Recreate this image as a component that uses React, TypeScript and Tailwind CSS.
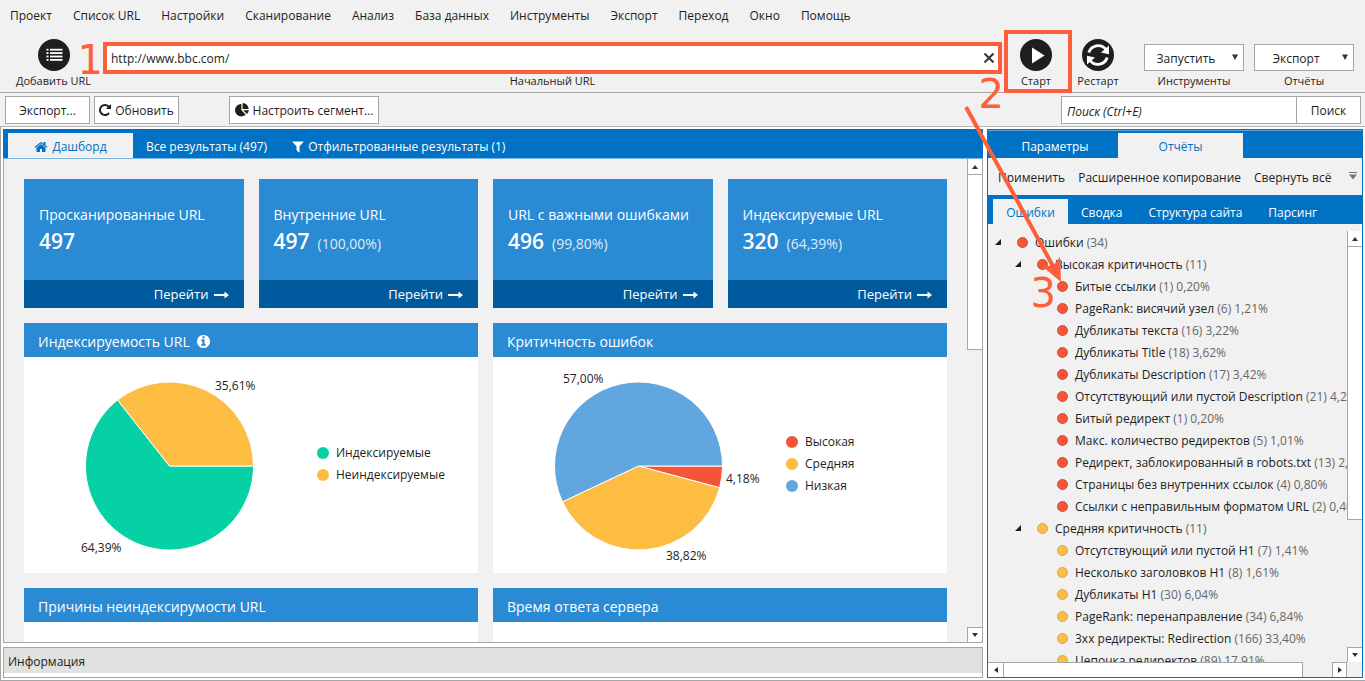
import React, { useState } from "react";

type IconProps = { className?: string };

const HomeIcon = ({ className }: IconProps) => (
  <svg viewBox="0 0 1664 1792" className={className} fill="currentColor" aria-hidden="true">
    <path d="M1408 992v480q0 26-19 45t-45 19h-384v-384h-256v384h-384q-26 0-45-19t-19-45v-480q0-1 .5-3t.5-3l575-474 575 474q1 2 1 6zm223-69l-62 74q-8 9-21 11h-3q-13 0-21-7l-692-577-692 577q-12 8-24 7-13-2-21-11l-62-74q-8-10-7-23.5t11-21.5l719-599q32-26 76-26t76 26l244 204v-195q0-14 9-23t23-9h192q14 0 23 9t9 23v408l219 182q10 8 11 21.5t-7 23.5z" />
  </svg>
);

const FilterIcon = ({ className }: IconProps) => (
  <svg viewBox="192 192 1408 1536" className={className} fill="currentColor" aria-hidden="true">
    <path d="M1595 295q17 41-14 70l-493 493v742q0 42-39 59-13 5-25 5-27 0-45-19l-256-256q-19-19-19-45v-486l-493-493q-31-29-14-70 17-39 59-39h1280q42 0 59 39z" />
  </svg>
);

const RepeatIcon = ({ className }: IconProps) => (
  <svg viewBox="128 128 1536 1536" className={className} fill="currentColor" aria-hidden="true">
    <path d="M1664 256v448q0 26-19 45t-45 19h-448q-42 0-59-40-17-39 14-69l138-138q-148-137-349-137-104 0-198.5 40.5t-163.5 109.5-109.5 163.5-40.5 198.5 40.5 198.5 109.5 163.5 163.5 109.5 198.5 40.5q119 0 225-52t179-147q7-10 23-12 15 0 25 9l137 138q9 8 9.5 20.5t-7.5 22.5q-109 132-264 204.5t-327 72.5q-156 0-298-61t-245-164-164-245-61-298 61-298 164-245 245-164 298-61q147 0 284.5 55.5t244.5 156.5l130-129q29-31 70-14 39 17 39 59z" />
  </svg>
);

const InfoIcon = ({ className }: IconProps) => (
  <svg viewBox="128 128 1536 1536" className={className} fill="currentColor" aria-hidden="true">
    <path d="M1152 1376v-160q0-14-9-23t-23-9h-96v-512q0-14-9-23t-23-9h-320q-14 0-23 9t-9 23v160q0 14 9 23t23 9h96v320h-96q-14 0-23 9t-9 23v160q0 14 9 23t23 9h448q14 0 23-9t9-23zm-128-896v-160q0-14-9-23t-23-9h-192q-14 0-23 9t-9 23v160q0 14 9 23t23 9h192q14 0 23-9t9-23zm640 416q0 209-103 385.5t-279.5 279.5-385.5 103-385.5-103-279.5-279.5-103-385.5 103-385.5 279.5-279.5 385.5-103 385.5 103 279.5 279.5 103 385.5z" />
  </svg>
);

const SegmentIcon = ({ className }: IconProps) => (
  <svg viewBox="0 0 14 14" className={className} fill="currentColor" aria-hidden="true">
    <path d="M6.4 1v6.2l4.3 4.3A6.2 6.2 0 1 1 6.4 1z" />
    <path d="M7.6 0a6.2 6.2 0 0 1 6 6H7.6z" />
    <path d="M8.2 7.2h5.6a6 6 0 0 1-1.7 3.9z" />
  </svg>
);

const ArrowRightIcon = ({ className }: IconProps) => (
  <svg viewBox="0 0 15 8" className={className} fill="currentColor" aria-hidden="true">
    <path d="M0 3h10.500V.4L15 4l-4.500 3.600V5H0z" />
  </svg>
);

const ListCircleIcon = () => (
  <svg viewBox="0 0 32 32" className="size-8" aria-hidden="true">
    <circle cx="16" cy="16" r="16" fill="#1e1e1e" />
    {[10.6, 14, 17.4, 20.8].map((y) => (
      <g key={y} fill="#fff">
        <rect x="8.500" y={y - 0.8} width="2" height="1.800" />
        <rect x="12" y={y - 0.8} width="12.500" height="1.800" />
      </g>
    ))}
  </svg>
);

const PlayCircleIcon = () => (
  <svg viewBox="0 0 32 32" className="size-8" aria-hidden="true">
    <circle cx="16" cy="16" r="16" fill="#1e1e1e" />
    <path d="M12 8.500l12.500 8L12 24.500z" fill="#fff" />
  </svg>
);

const RestartCircleIcon = () => (
  <svg viewBox="0 0 32 32" className="size-8" aria-hidden="true">
    <circle cx="16" cy="16" r="16" fill="#1e1e1e" />
    <g fill="none" stroke="#fff" strokeWidth="2.800">
      <path d="M6.800 13.500a9.800 9.800 0 0 1 17-3.200" />
      <path d="M25.200 18.500a9.800 9.800 0 0 1-17 3.200" />
    </g>
    <path d="M27 6.500v8.700l-8-1.700z" fill="#fff" />
    <path d="M5 25.500v-8.700l8 1.700z" fill="#fff" />
  </svg>
);

const MENU = [
  "Проект", "Список URL", "Настройки", "Сканирование", "Анализ", "База данных",
  "Инструменты", "Экспорт", "Переход", "Окно", "Помощь",
];

const STATS = [
  { title: "Просканированные URL", value: "497", share: "" },
  { title: "Внутренние URL", value: "497", share: "(100,00%)" },
  { title: "URL с важными ошибками", value: "496", share: "(99,80%)" },
  { title: "Индексируемые URL", value: "320", share: "(64,39%)" },
];

type Level = "high" | "medium";
type Row = { depth: 0 | 1 | 2; level: Level; name: string; info: string };

const ROWS: Row[] = [
  { depth: 0, level: "high", name: "Ошибки", info: "(34)" },
  { depth: 1, level: "high", name: "Высокая критичность", info: "(11)" },
  { depth: 2, level: "high", name: "Битые ссылки", info: "(1) 0,20%" },
  { depth: 2, level: "high", name: "PageRank: висячий узел", info: "(6) 1,21%" },
  { depth: 2, level: "high", name: "Дубликаты текста", info: "(16) 3,22%" },
  { depth: 2, level: "high", name: "Дубликаты Title", info: "(18) 3,62%" },
  { depth: 2, level: "high", name: "Дубликаты Description", info: "(17) 3,42%" },
  { depth: 2, level: "high", name: "Отсутствующий или пустой Description", info: "(21) 4,23%" },
  { depth: 2, level: "high", name: "Битый редирект", info: "(1) 0,20%" },
  { depth: 2, level: "high", name: "Макс. количество редиректов", info: "(5) 1,01%" },
  { depth: 2, level: "high", name: "Редирект, заблокированный в robots.txt", info: "(13) 2,62%" },
  { depth: 2, level: "high", name: "Страницы без внутренних ссылок", info: "(4) 0,80%" },
  { depth: 2, level: "high", name: "Ссылки с неправильным форматом URL", info: "(2) 0,40%" },
  { depth: 1, level: "medium", name: "Средняя критичность", info: "(11)" },
  { depth: 2, level: "medium", name: "Отсутствующий или пустой H1", info: "(7) 1,41%" },
  { depth: 2, level: "medium", name: "Несколько заголовков H1", info: "(8) 1,61%" },
  { depth: 2, level: "medium", name: "Дубликаты H1", info: "(30) 6,04%" },
  { depth: 2, level: "medium", name: "PageRank: перенаправление", info: "(34) 6,84%" },
  { depth: 2, level: "medium", name: "3xx редиректы: Redirection", info: "(166) 33,40%" },
  { depth: 2, level: "medium", name: "Цепочка редиректов", info: "(89) 17,91%" },
];

const INDENT = { 0: "pl-[7px]", 1: "pl-[27px]", 2: "pl-[47px]" };
const DOT = {
  high: "border-[#e04b2c] bg-[#f55536]",
  medium: "border-[#e5a838] bg-[#fdbc42]",
};

type Slice = { value: number; color: string };

function Pie({ slices, labels }: { slices: Slice[]; labels: { text: string; x: number; y: number }[] }) {
  const cx = 145.5;
  const cy = 109;
  const r = 84;
  const at = (share: number) => {
    const a = share * 2 * Math.PI;
    return `${cx + r * Math.cos(a)} ${cy + r * Math.sin(a)}`;
  };
  let from = 0;
  return (
    <svg viewBox="0 0 293 216" className="h-[216px] w-[293px] shrink-0" role="img">
      {slices.map((s) => {
        const start = from;
        from += s.value / 100;
        return (
          <path
            key={s.color}
            d={`M${cx} ${cy}L${at(start)}A${r} ${r} 0 ${s.value > 50 ? 1 : 0} 1 ${at(from)}Z`}
            fill={s.color}
            stroke="#fff"
            strokeWidth="1"
          />
        );
      })}
      {labels.map((l) => (
        <text key={l.text} x={l.x} y={l.y} fontSize="12" fill="#1e1e1e">
          {l.text}
        </text>
      ))}
    </svg>
  );
}

function Legend({ items }: { items: { name: string; dot: string }[] }) {
  return (
    <ul className="pb-0.5 text-[12px] leading-[22px]">
      {items.map((i) => (
        <li key={i.name} className="flex items-center gap-[7px]">
          <span className={`size-3 rounded-full ${i.dot}`} />
          {i.name}
        </li>
      ))}
    </ul>
  );
}

function Panel({ title, info, children }: { title: string; info?: boolean; children?: React.ReactNode }) {
  return (
    <section className="flex flex-col">
      <h2 className="flex h-[34px] items-center gap-[7px] bg-[#2a8ad4] px-3.5 pt-0.5 text-[14px] text-white">
        {title}
        {info && <InfoIcon className="size-[13px]" />}
      </h2>
      <div className="flex h-[216px] items-center bg-white">{children}</div>
    </section>
  );
}

const TRIANGLE = {
  up: "M4 2l3 4H1z",
  down: "M4 6L1 2h6z",
  left: "M2 4l4-3v6z",
  right: "M6 4L2 1v6z",
};

function ScrollButton({ dir, className }: { dir: keyof typeof TRIANGLE; className: string }) {
  return (
    <button
      type="button"
      aria-label={dir}
      className={`flex size-[15px] shrink-0 items-center justify-center border-[#a6a6a6] bg-white ${className}`}
    >
      <svg viewBox="0 0 8 8" className="size-2" fill="#333" aria-hidden="true">
        <path d={TRIANGLE[dir]} />
      </svg>
    </button>
  );
}

function ToolSelect({ id, label, option }: { id: string; label: string; option: string }) {
  return (
    <div className="flex w-[100px] flex-col items-center">
      <div className="relative w-full">
        <select
          id={id}
          className="h-[27px] w-full appearance-none border border-[#a6a6a6] bg-white pt-0.5 pr-4 text-center text-[12px] [text-align-last:center]"
        >
          <option>{option}</option>
        </select>
        <svg viewBox="0 0 6 6" className="pointer-events-none absolute top-2.5 right-1.5 size-1.5" fill="#333" aria-hidden="true">
          <path d="M0 .5h6L3 6z" />
        </svg>
      </div>
      <label htmlFor={id} className="mt-0.5 text-[11px] leading-4">
        {label}
      </label>
    </div>
  );
}

export default function App() {
  const [url, setUrl] = useState("http://www.bbc.com/");
  const toolButton =
    "flex h-7 items-center justify-center border border-[#a6a6a6] bg-white pt-0.5 text-[12px] whitespace-nowrap";
  const step = "pointer-events-none absolute font-['DejaVu_Sans',sans-serif] text-[40px] leading-10 text-[#ff5e3a]";

  return (
    <div className="relative flex h-screen min-w-[1100px] flex-col overflow-hidden bg-[#f1f1f1] font-['Open_Sans','Noto_Sans',sans-serif] text-[12px] text-[#1e1e1e]">
      <nav className="flex h-8 shrink-0 items-center gap-[21px] px-2.5">
        {MENU.map((m) => (
          <button key={m} type="button">{m}</button>
        ))}
      </nav>

      <div className="flex h-[61px] shrink-0 items-start border-b border-[#a6a6a6] pr-[11px]">
        <button type="button" className="mt-[7px] flex w-[107px] shrink-0 flex-col items-center text-[11px] leading-4">
          <ListCircleIcon />
          <span className="mt-0.5">Добавить URL</span>
        </button>

        <div className="relative -ml-1 mt-2.5 flex min-w-0 flex-1 flex-col items-center">
          <span className={`${step} right-full bottom-2`}>1</span>
          <div className="flex h-8 w-full items-center border-4 border-[#ff5e3a] bg-white">
            <input
              id="start-url"
              value={url}
              onChange={(e) => setUrl(e.target.value)}
              className="min-w-0 flex-1 px-1 pt-0.5 text-[12px] outline-none"
            />
            <button type="button" aria-label="Очистить" onClick={() => setUrl("")} className="px-1">
              <svg viewBox="0 0 10 10" className="size-2.5" stroke="#333" strokeWidth="2" aria-hidden="true">
                <path d="M.5.500l9 9M9.500.500l-9 9" />
              </svg>
            </button>
          </div>
          <label htmlFor="start-url" className="text-[11px] leading-3.5">Начальный URL</label>
          <span className={`${step} top-8 -right-0.5`}>2</span>
        </div>

        <button
          type="button"
          className="-mt-0.5 ml-0.5 flex h-[63px] w-[68px] shrink-0 flex-col items-center border-4 border-[#ff5e3a] pt-[5px] pr-1 text-[11px] leading-4"
        >
          <PlayCircleIcon />
          <span className="mt-0.5">Старт</span>
        </button>
        <button type="button" className="mt-[7px] flex w-[52px] shrink-0 flex-col items-center text-[11px] leading-4">
          <RestartCircleIcon />
          <span className="mt-0.5">Рестарт</span>
        </button>
        <div className="mt-3 ml-5 flex shrink-0 gap-2.5">
          <ToolSelect id="run" label="Инструменты" option="Запустить" />
          <ToolSelect id="export" label="Отчёты" option="Экспорт" />
        </div>
      </div>

      <div className="flex h-[34px] shrink-0 items-start border-b border-[#b5b5b5] pt-[3px] pr-1 pl-[5px]">
        <button type="button" className={`${toolButton} w-[85px]`}>Экспорт...</button>
        <button type="button" className={`${toolButton} ml-1 w-[85px] gap-1`}>
          <RepeatIcon className="mb-0.5 size-3 shrink-0" />
          Обновить
        </button>
        <button type="button" className={`${toolButton} ml-[50px] w-[150px] gap-1`}>
          <SegmentIcon className="mb-0.5 size-3.5 shrink-0" />
          Настроить сегмент...
        </button>
        <form className="ml-auto flex" onSubmit={(e) => e.preventDefault()}>
          <input
            aria-label="Поиск"
            placeholder="Поиск (Ctrl+E)"
            className="h-7 w-[236px] border border-[#a6a6a6] bg-white px-[5px] pt-0.5 text-[12px] italic outline-none placeholder:text-[#1e1e1e]"
          />
          <button type="submit" className={`${toolButton} -ml-px w-[65px]`}>Поиск</button>
        </form>
      </div>

      <div className="flex min-h-0 flex-1 gap-1 border-b border-l border-[#a6a6a6] bg-white pt-0.5 pr-0.5 pb-0.5 pl-0.5">
        <div className="flex min-w-0 flex-1 flex-col gap-1">
          <main className="flex min-h-0 flex-1 flex-col border-b border-[#a6a6a6] bg-[#f1f1f1]">
            <div className="flex h-[30px] shrink-0 items-end border-b border-[#7db5e2] bg-[#0072c6] pl-[5px] text-white">
              <button type="button" className="flex h-[25px] w-[125px] items-center justify-center gap-1 bg-[#f1f1f1] pt-0.5 text-[#0072c6]">
                <HomeIcon className="size-3.5" />
                Дашборд
              </button>
              <button type="button" className="flex h-[25px] items-center px-[13px] pt-0.5">Все результаты (497)</button>
              <button type="button" className="flex h-[25px] items-center gap-1 px-3 pt-0.5">
                <FilterIcon className="size-3" />
                Отфильтрованные результаты (1)
              </button>
            </div>
            <div className="flex min-h-0 flex-1 border-x border-[#a6a6a6]">
              <div className="min-w-0 flex-1 overflow-hidden p-5">
                <div className="grid grid-cols-4 gap-[15px]">
                  {STATS.map((s) => (
                    <article key={s.title} className="flex h-[129px] flex-col bg-[#2a8ad4] text-white">
                      <div className="flex-1 px-[15px] pt-6">
                        <h3 className="text-[14px] leading-6 whitespace-nowrap">{s.title}</h3>
                        <p className="leading-7">
                          <strong className="text-[21px] font-semibold">{s.value}</strong>
                          {s.share && <span className="ml-2 text-[14px] text-[#dcecf9]">{s.share}</span>}
                        </p>
                      </div>
                      <a href="#details" className="flex h-7 items-center justify-end gap-[5px] bg-[#005a9e] px-[15px] pt-0.5 text-[13px]">
                        Перейти
                        <ArrowRightIcon className="h-2 w-[15px]" />
                      </a>
                    </article>
                  ))}
                </div>
                <div className="mt-[15px] grid grid-cols-2 gap-[15px]">
                  <Panel title="Индексируемость URL" info>
                    <Pie
                      slices={[{ value: 64.39, color: "#05d1a5" }, { value: 35.61, color: "#fdbc42" }]}
                      labels={[{ text: "35,61%", x: 191, y: 33 }, { text: "64,39%", x: 57, y: 195 }]}
                    />
                    <Legend items={[{ name: "Индексируемые", dot: "bg-[#05d1a5]" }, { name: "Неиндексируемые", dot: "bg-[#fdbc42]" }]} />
                  </Panel>
                  <Panel title="Критичность ошибок">
                    <Pie
                      slices={[{ value: 4.18, color: "#f55536" }, { value: 38.82, color: "#fdbc42" }, { value: 57, color: "#62a6e0" }]}
                      labels={[{ text: "57,00%", x: 70, y: 26 }, { text: "4,18%", x: 233, y: 126 }, { text: "38,82%", x: 173, y: 203 }]}
                    />
                    <Legend
                      items={[
                        { name: "Высокая", dot: "bg-[#f55536]" },
                        { name: "Средняя", dot: "bg-[#fdbc42]" },
                        { name: "Низкая", dot: "bg-[#62a6e0]" },
                      ]}
                    />
                  </Panel>
                  <Panel title="Причины неиндексирумости URL" />
                  <Panel title="Время ответа сервера" />
                </div>
              </div>
              <div className="flex w-[15px] shrink-0 flex-col">
                <ScrollButton dir="up" className="border-l" />
                <div className="h-[176px] border border-r-0 border-[#a6a6a6] bg-white" />
                <ScrollButton dir="down" className="mt-auto border-t border-l" />
              </div>
            </div>
          </main>
          <footer className="h-[31px] shrink-0 border border-[#a6a6a6] bg-white">
            <div className="flex h-[25px] items-center bg-[#e1e1e1] px-1 pt-0.5">Информация</div>
          </footer>
        </div>

        <aside className="flex w-[376px] shrink-0 flex-col border border-[#0072c6] bg-[#f1f1f1]">
          <div className="flex h-7 shrink-0 items-end border-t border-[#5ba4dc] bg-[#0072c6] pl-1 text-white">
            <button type="button" className="h-[25px] w-[126px] pt-0.5">Параметры</button>
            <button type="button" className="h-[25px] w-[125px] bg-[#f1f1f1] pt-0.5 text-[#0072c6]">Отчёты</button>
          </div>
          <div className="flex h-[37px] shrink-0 items-center gap-[13px] pt-0.5 pr-[5px] pl-2.5 whitespace-nowrap">
            <button type="button">Применить</button>
            <button type="button">Расширенное копирование</button>
            <button type="button">Свернуть всё</button>
            <svg viewBox="0 0 8 8" className="mb-1 ml-auto size-2 shrink-0" fill="#777" aria-hidden="true">
              <path d="M0 0h8v1H0zM0 2.500h8L4 7.500z" />
            </svg>
          </div>
          <div className="flex h-[29px] shrink-0 items-end bg-[#0072c6] pl-[5px] text-white">
            <button type="button" className="h-[25px] w-[75px] bg-[#f1f1f1] pt-0.5 text-[#0072c6]">Ошибки</button>
            <button type="button" className="h-[25px] px-[13px] pt-0.5">Сводка</button>
            <button type="button" className="h-[25px] px-[13px] pt-0.5">Структура сайта</button>
            <button type="button" className="h-[25px] px-[13px] pt-0.5">Парсинг</button>
          </div>
          <div className="flex min-h-0 flex-1 pt-[7px]">
            <ul className="min-w-0 flex-1 overflow-hidden">
              {ROWS.map((r) => (
                <li key={r.name} className={`flex h-[22px] items-center whitespace-nowrap ${INDENT[r.depth]}`}>
                  <svg viewBox="0 0 6 6" className="size-1.5 shrink-0" fill={r.depth < 2 ? "#1e1e1e" : "none"} aria-hidden="true">
                    <path d="M6 0v6H0z" />
                  </svg>
                  <span className={`mr-[7px] ml-4 size-[11px] shrink-0 rounded-full border ${DOT[r.level]}`} />
                  <span className="pt-0.5">
                    {r.name} <span className="text-[#666]">{r.info}</span>
                  </span>
                </li>
              ))}
            </ul>
            <div className="flex w-[15px] shrink-0 flex-col">
              <ScrollButton dir="up" className="border-l" />
              <div className="h-[274px] border border-r-0 border-[#a6a6a6] bg-white" />
              <ScrollButton dir="down" className="mt-auto border-t border-l" />
            </div>
          </div>
          <div className="flex h-[15px] shrink-0">
            <ScrollButton dir="left" className="border-t" />
            <div className="w-[300px] border border-b-0 border-[#a6a6a6] bg-white" />
            <ScrollButton dir="right" className="mr-[15px] ml-auto border-t border-x" />
          </div>
        </aside>
      </div>

      <svg viewBox="0 0 110 190" className="pointer-events-none absolute top-[100px] right-[295px] h-[190px] w-[110px]" aria-hidden="true">
        <path d="M6 7L94 168" stroke="#ff5e3a" strokeWidth="4" fill="none" />
        <path d="M101 182L82 166l11 0 7-9z" fill="#ff5e3a" />
      </svg>
      <span className={`${step} top-[273px] right-[309px]`}>3</span>
    </div>
  );
}
